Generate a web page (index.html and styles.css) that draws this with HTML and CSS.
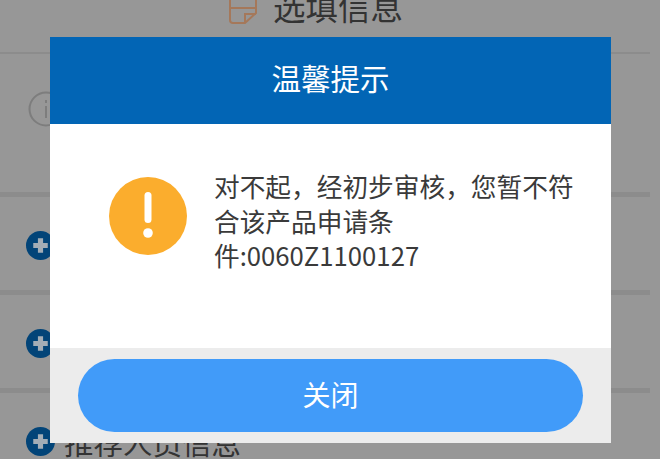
FILE: index.html
```html
<!DOCTYPE html>
<html lang="zh-CN">
<head>
<meta charset="utf-8">
<title>选填信息</title>
<link rel="stylesheet" href="styles.css">
</head>
<body>
<main class="page">
  <header class="page-head">
    <svg class="doc-icon" viewBox="0 0 30 26" aria-hidden="true">
      <path d="M2 0V20Q2 23 5 23H17L28 13V0" />
      <path d="M2 8H28" />
      <path d="M17 23V14H28" />
    </svg>
    <h1 class="page-title">选填信息</h1>
  </header>
  <section class="info-row">
    <svg class="info-icon" viewBox="0 0 36 36" aria-hidden="true">
      <circle cx="18" cy="18" r="16.5" />
      <path d="M18 15V27M18 9V12" />
    </svg>
  </section>
  <section class="add-row">
    <svg class="plus-icon" viewBox="0 0 28 28" aria-hidden="true"><circle cx="14" cy="14" r="14" /><path d="M14 7V21M7 14H21" /></svg>
  </section>
  <section class="add-row">
    <svg class="plus-icon" viewBox="0 0 28 28" aria-hidden="true"><circle cx="14" cy="14" r="14" /><path d="M14 7V21M7 14H21" /></svg>
  </section>
  <section class="add-row last">
    <svg class="plus-icon" viewBox="0 0 28 28" aria-hidden="true"><circle cx="14" cy="14" r="14" /><path d="M14 7V21M7 14H21" /></svg>
    <span class="row-label">推荐人员信息</span>
  </section>
</main>
<div class="dialog" role="dialog">
  <div class="dialog-head">温馨提示</div>
  <div class="dialog-body">
    <svg class="warn-icon" viewBox="0 0 78 78" aria-hidden="true">
      <circle cx="39" cy="39" r="39" />
      <rect x="35.5" y="15" width="7" height="31" rx="3.5" />
      <circle cx="39" cy="56" r="4.8" />
    </svg>
    <p class="dialog-text">对不起，经初步审核，您暂不符合该产品申请条件:0060Z1100127</p>
  </div>
  <div class="dialog-foot">
    <button class="close-btn" type="button">关闭</button>
  </div>
</div>
</body>
</html>
```
FILE: styles.css
```css
* { box-sizing: border-box; }
html, body { margin: 0; height: 100%; }
body {
  background: #979797;
  font-family: "Noto Sans CJK SC", "Noto Sans", sans-serif;
  overflow: hidden;
  position: relative;
}
.page { width: 650px; height: 459px; overflow: hidden; }
.page-head {
  height: 54px;
  border-bottom: 2px solid #8c8c8c;
  display: flex;
  padding-left: 228px;
  gap: 15px;
}
.doc-icon { width: 30px; height: 26px; flex: none; fill: none; stroke: #a5785a; stroke-width: 2; }
.page-title { margin: -17px 0 0; font-size: 32.5px; line-height: 46px; font-weight: 400; color: #333; white-space: nowrap; }
.info-row { height: 143px; display: flex; align-items: center; padding: 0 0 29px 28px; border-bottom: 5px solid #8c8c8c; }
.info-icon { width: 36px; height: 36px; fill: none; stroke: #7d7d7d; stroke-width: 2; }
.add-row { height: 98px; display: flex; align-items: center; gap: 9px; padding: 4px 0 0 26px; border-bottom: 5px solid #8c8c8c; }
.add-row.last { border-bottom: 0; align-items: flex-start; padding-top: 34px; }
.plus-icon { width: 29px; height: 29px; flex: none; }
.plus-icon circle { fill: #024478; }
.plus-icon path { stroke: #a3adb6; stroke-width: 5; fill: none; }
.row-label { margin-top: -4px; font-size: 29.5px; line-height: 36px; color: #333; white-space: nowrap; }
.dialog {
  position: absolute;
  left: 50px;
  top: 37px;
  width: 561px;
  height: 406px;
  display: flex;
  flex-direction: column;
  background: #fff;
}
.dialog-head {
  height: 87px;
  flex: none;
  background: #0265b5;
  color: #fff;
  font-size: 29.5px;
  padding: 0 0 7px;
  display: flex;
  align-items: center;
  justify-content: center;
}
.dialog-body { flex: 1; display: flex; gap: 27px; padding: 52px 0 0 59px; }
.warn-icon { width: 78px; height: 78px; flex: none; margin-top: 1px; }
.warn-icon circle:first-child { fill: #fbad2d; }
.warn-icon rect, .warn-icon circle:last-child { fill: #fff; }
.dialog-text { margin: -7px 0 0; width: 362px; font-size: 25.7px; line-height: 34.5px; color: #3a3a3a; }
.dialog-foot { height: 95px; flex: none; background: #ececec; padding: 11px 28px 11px 28px; }
.close-btn {
  width: 100%;
  height: 73px;
  border: 0;
  border-radius: 37px;
  background: #419bf9;
  color: #fff;
  font: inherit;
  font-size: 28px;
  padding: 0 0 4px;
}
```
